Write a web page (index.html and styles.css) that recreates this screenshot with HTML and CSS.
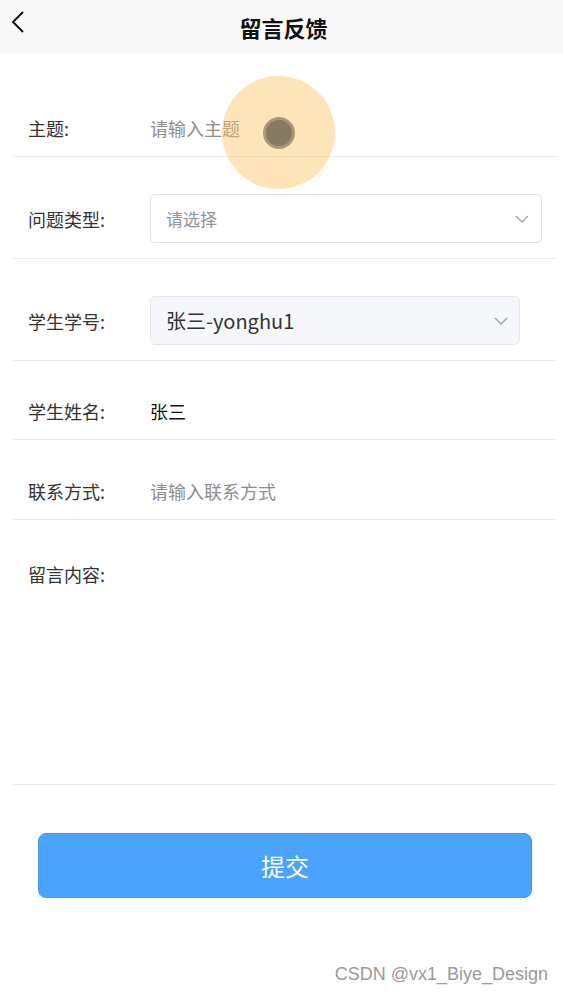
FILE: index.html
```html
<!DOCTYPE html>
<html lang="zh-CN">
<head>
    <meta charset="UTF-8">
    <meta name="viewport" content="width=device-width, initial-scale=1.0">
    <title>留言反馈</title>
    <link rel="stylesheet" href="styles.css">
</head>
<body>
    <div class="header">
        <a class="back-btn" href="#">
            <svg width="16" height="24" viewBox="0 0 16 24"><path d="M13 2 L3 12 L13 22" fill="none" stroke="#111" stroke-width="2"/></svg>
        </a>
        <h1>留言反馈</h1>
    </div>

    <form class="feedback-form">
        <div class="form-row">
            <label>主题:</label>
            <input type="text" class="text-input" placeholder="请输入主题">
        </div>
        <div class="form-row">
            <label>问题类型:</label>
            <div class="select-box">
                <span class="placeholder">请选择</span>
                <svg class="arrow" width="14" height="8" viewBox="0 0 14 8"><path d="M1 1 L7 7 L13 1" fill="none" stroke="#9a9ea6" stroke-width="1.4"/></svg>
            </div>
        </div>
        <div class="form-row">
            <label>学生学号:</label>
            <div class="select-box disabled">
                <span class="value">张三-yonghu1</span>
                <svg class="arrow" width="14" height="8" viewBox="0 0 14 8"><path d="M1 1 L7 7 L13 1" fill="none" stroke="#9a9ea6" stroke-width="1.4"/></svg>
            </div>
        </div>
        <div class="form-row">
            <label>学生姓名:</label>
            <span class="plain-value">张三</span>
        </div>
        <div class="form-row">
            <label>联系方式:</label>
            <input type="text" class="text-input" placeholder="请输入联系方式">
        </div>
        <div class="form-row content-row">
            <label>留言内容:</label>
            <textarea class="text-area"></textarea>
        </div>

        <button type="submit" class="submit-btn">提交</button>
    </form>

    <div class="touch-mark"><span class="touch-dot"></span></div>
    <div class="watermark">CSDN @vx1_Biye_Design</div>
</body>
</html>
```

FILE: styles.css
```css
body {
    margin: 0;
    font-family: "Noto Sans CJK SC", "Noto Sans", sans-serif;
    background: #fff;
    color: #333;
    position: relative;
    min-height: 995px;
}

.header {
    height: 54px;
    background: #f8f8f8;
    display: flex;
    align-items: center;
    justify-content: center;
    position: relative;
}

.back-btn {
    position: absolute;
    left: 10px;
    top: 10px;
}

.header h1 {
    margin: 0 0 0 4px;
    font-size: 22px;
    font-weight: bold;
    color: #111;
}

.feedback-form {
    margin: 0 7px 0 13px;
    padding-top: 24px;
}

.form-row {
    display: flex;
    align-items: center;
    padding: 37px 14px 15px 15px;
    border-bottom: 1px solid #ebebeb;
    height: 26px;
}

.form-row:nth-child(2),
.form-row:nth-child(3) {
    height: 49px;
}

.form-row:nth-child(5) {
    height: 27px;
}

.form-row label {
    width: 122px;
    flex-shrink: 0;
    font-size: 18px;
    color: #333;
}

.text-input {
    flex: 1;
    border: none;
    outline: none;
    font-family: inherit;
    font-size: 18px;
    padding: 0;
    color: #333;
}

.text-input::placeholder {
    color: #8e8e8e;
}

.select-box {
    flex: 1;
    height: 47px;
    border: 1px solid #dcdfe6;
    border-radius: 5px;
    display: flex;
    align-items: center;
    justify-content: space-between;
    padding: 0 12px 0 15px;
}

.select-box.disabled {
    flex: 0 0 auto;
    width: 342px;
    background: #f5f7fa;
    border-color: #e4e7ed;
    padding-right: 11px;
}

.select-box .placeholder {
    font-size: 17px;
    color: #8f939b;
}

.select-box .value {
    font-size: 20px;
    color: #333;
}

.plain-value {
    font-size: 18px;
    color: #111;
}

.content-row {
    align-items: flex-start;
    height: 212px;
}

.content-row label {
    padding-top: 4px;
}

.text-area {
    flex: 1;
    height: 100%;
    border: none;
    outline: none;
    resize: none;
    font-family: inherit;
    font-size: 18px;
}

.submit-btn {
    display: block;
    width: 494px;
    height: 65px;
    margin: 48px 0 0 25px;
    border: 1px solid #4197f0;
    border-radius: 8px;
    background: #4aa3fd;
    color: #fff;
    font-family: inherit;
    font-size: 24px;
}

.touch-mark {
    position: absolute;
    left: 222px;
    top: 76px;
    width: 113px;
    height: 113px;
    border-radius: 50%;
    background: rgba(253, 196, 100, 0.45);
    display: flex;
    align-items: center;
    justify-content: center;
}

.touch-dot {
    width: 26px;
    height: 26px;
    border-radius: 50%;
    background: #877a62;
    border: 3px solid #a8977a;
}

.watermark {
    position: absolute;
    right: 15px;
    top: 964px;
    font-family: "Liberation Sans", Arial, sans-serif;
    font-size: 18px;
    color: #9a9a9a;
}
```
